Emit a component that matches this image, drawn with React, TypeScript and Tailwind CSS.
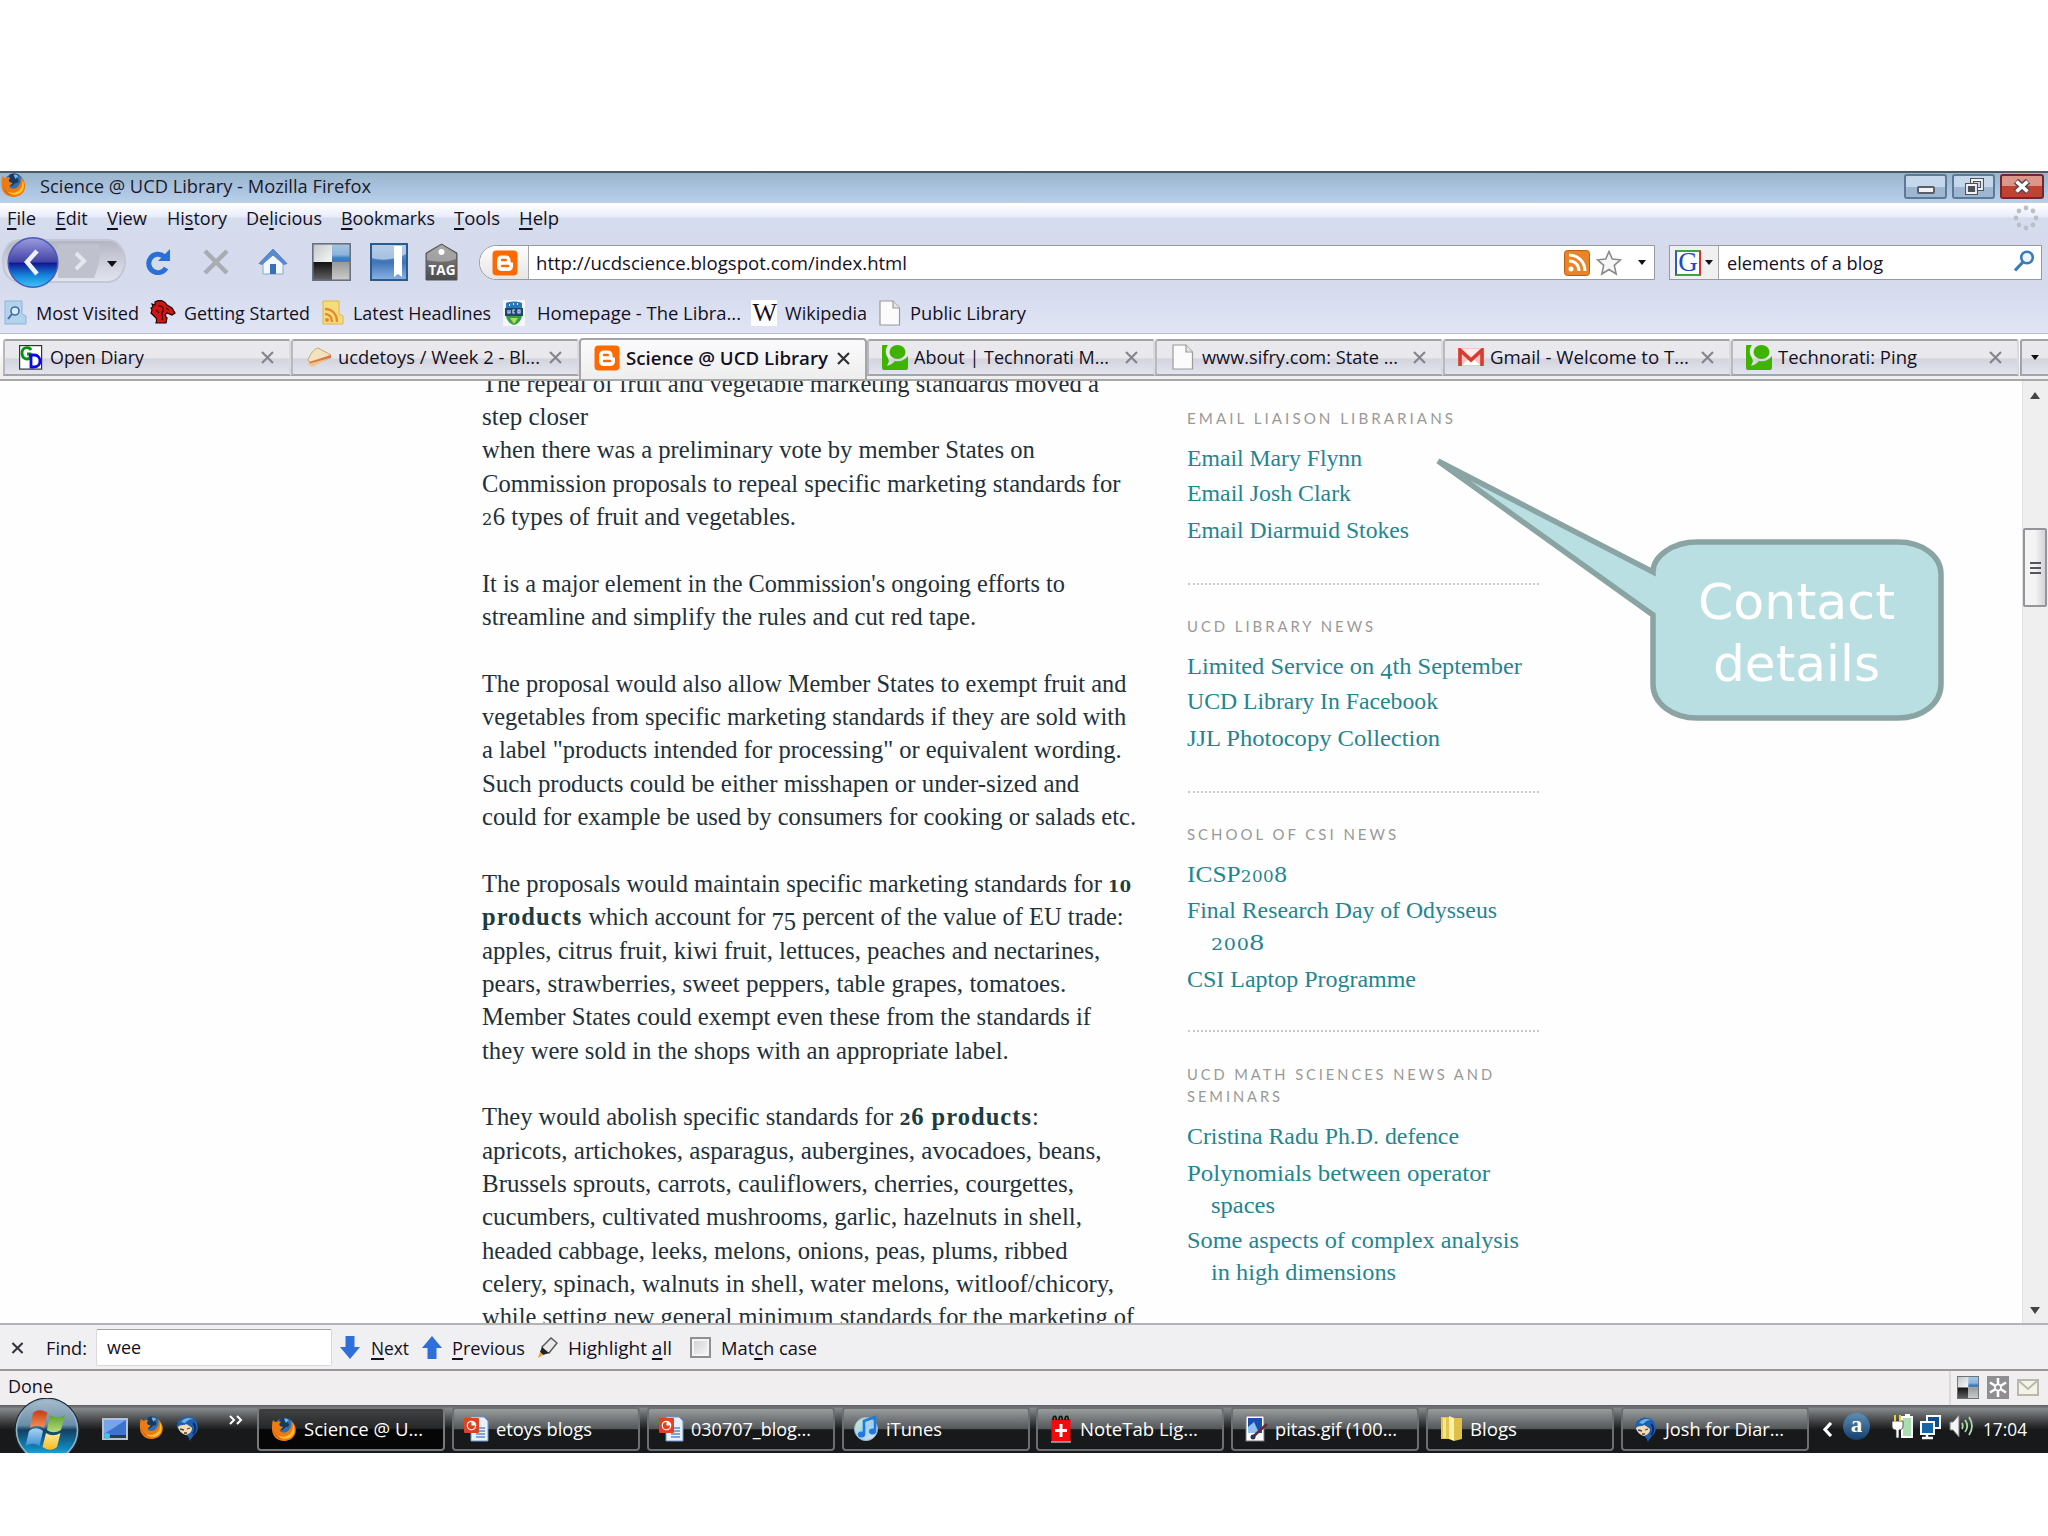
import { useLayoutEffect, useRef } from "react";
import type { ReactNode } from "react";

const UI = "font-['Open_Sans','Noto_Sans',sans-serif]";
const SERIF = "font-['Liberation_Serif',serif]";

/* One line of text stretched or squeezed horizontally to an exact width. */
function Fit({ w, className = "", children }: { w: number; className?: string; children: ReactNode }) {
  const ref = useRef<HTMLSpanElement>(null);
  useLayoutEffect(() => {
    const el = ref.current;
    if (!el) return;
    el.style.transform = "none";
    const natural = el.getBoundingClientRect().width;
    if (natural > 0) el.style.transform = `scaleX(${w / natural})`;
  }, [w, children]);
  return (
    <span className={"block shrink-0 whitespace-nowrap " + className} style={{ width: w }}>
      <span ref={ref} className="inline-block origin-left">{children}</span>
    </span>
  );
}

/* Old-style figures: 0-2 at x-height, 3-5, 7 and 9 hanging below the baseline. */
function OldFigures({ text }: { text: string }) {
  return (
    <>
      {text.split(/(\d)/).map((c, i) =>
        /^[012]$/.test(c) ? (
          <span key={i} className="font-['DejaVu_Serif',serif] text-[0.66em] leading-none tracking-[0.5px]">{c}</span>
        ) : /^[34579]$/.test(c) ? (
          <span key={i} className="relative top-[0.2em] leading-none">{c}</span>
        ) : (
          c
        ),
      )}
    </>
  );
}

const Strong = ({ text }: { text: string }) => (
  <b className="tracking-[1px] text-[#1d3c40]"><OldFigures text={text} /></b>
);

const U = ({ children }: { children: string }) => (
  <span className="underline decoration-[1.5px] underline-offset-[3px]">{children}</span>
);

/* ---------- icons ---------- */

const Firefox = ({ className = "h-[25px] w-[25px]" }: { className?: string }) => (
  <svg viewBox="0 0 26 26" className={className}>
    <circle cx="13.5" cy="11.5" r="10" fill="#2c6fb3" />
    <path d="M9 3c3-2 8-2 10 1-2 0-3 2-2 3 2 1 1 4-1 4-3 0-3 3-5 3-3 0-5-3-4-6z" fill="#173a63" />
    <path d="M13 3c2-1 4 0 5 1l-3 3z" fill="#6fb7e0" />
    <path d="M2 4c1 1 2 2 3 2 2-1 4-1 5 0-2 1-2 3-1 4l3 1c-1 2-3 2-3 4 2 2 6 2 8 0 3-3 4-6 3-10 4 3 6 8 4 13-2 5-7 7-11 7C6 25 1 20 1 13c0-4 0-6 1-9z" fill="#ee7a12" />
    <path d="M22 8c2 4 2 9-1 12-4 4-11 3-14 0 6 2 12 0 14-5 1-3 1-5 1-7z" fill="#fcc530" />
    <path d="M2 10c0 6 3 11 9 13-5-1-9-5-9-13z" fill="#b83c0b" />
  </svg>
);

const Blogger = () => (
  <svg viewBox="0 0 26 26" className="h-[26px] w-[26px]">
    <rect x="0.5" y="0.5" width="25" height="25" rx="4" fill="#ff6a00" />
    <path d="M9.5 5.5h4.5c2.8 0 4.500 2 4.500 4.500v1c0 1 .5 1.500 1.500 1.500s1 .5 1 1.500v2.500c0 2.500-2 4.500-4.500 4.500h-7C7 21 5 19 5 16.500V10c0-2.500 2-4.500 4.500-4.500z" fill="#fff" />
    <path d="M10 10h3.800M10 16h6" stroke="#ff6a00" strokeWidth="2.400" strokeLinecap="round" />
  </svg>
);

const Technorati = () => (
  <svg viewBox="0 0 26 26" className="h-[26px] w-[26px]">
    <path d="M0 2q0-1 1-1h5C3 5 3 10 6 14l1 3-2 5c4-1 6-3 8-5 6 1 10-1 13-5v12q0 2-2 2H2q-2 0-2-2z" fill="#3fb400" />
    <ellipse cx="15.500" cy="8" rx="8" ry="7" fill="#3fb400" />
  </svg>
);

const Page = () => (
  <svg viewBox="0 0 22 26" className="h-[26px] w-[22px]">
    <path d="M1 1h13l6.500 7v17H1z" fill="#fbfbfb" stroke="#9a9a9a" strokeWidth="1.200" />
    <path d="M14 1v7h6.500" fill="#e5e5e5" stroke="#9a9a9a" strokeWidth="1.200" />
  </svg>
);

const OpenDiary = () => (
  <svg viewBox="0 0 24 25" className="h-[25px] w-[24px]">
    <rect x=".6" y=".6" width="22" height="23.500" fill="#fff" stroke="#333" strokeWidth="1.200" />
    <path d="M12 5C10 1 3 2 3 8s5 7 8 5V9H8" fill="none" stroke="#00930e" strokeWidth="2.800" />
    <path d="M12 10v12h3c8 0 8-12 0-12h-5" fill="none" stroke="#0808e8" strokeWidth="2.800" />
  </svg>
);

const Sandwich = () => (
  <svg viewBox="0 0 26 24" className="h-[24px] w-[26px]">
    <path d="M2 15C4 9 8 4 12 3l13 7-20 9z" fill="#f3e3bd" stroke="#c9a877" strokeWidth="1" />
    <path d="M3 17l22-7v3L5 21z" fill="#d97a4d" />
    <path d="M2 19l22-6-18 9z" fill="#efc58a" />
  </svg>
);

const Gmail = () => (
  <svg viewBox="0 0 26 18" className="h-[18px] w-[26px]">
    <rect width="26" height="18" fill="#f7c6c2" />
    <path d="M4 17l9-8 9 8z" fill="#fff" />
    <path d="M3.500 1h19L13 10z" fill="#fdeceb" />
    <path d="M2 18V2l11 10L24 2v16" fill="none" stroke="#d93a32" strokeWidth="3.600" />
  </svg>
);

const Rss = () => (
  <svg viewBox="0 0 26 26" className="h-[26px] w-[26px]">
    <rect x=".5" y=".5" width="25" height="25" rx="3" fill="#e98526" stroke="#bf5d10" />
    <path d="M5 5c9 0 16 7 16 16M5 11c6 0 10 4 10 10" fill="none" stroke="#fff" strokeWidth="3" />
    <circle cx="7" cy="19" r="2.500" fill="#fff" />
  </svg>
);

const TileSquare = ({ className }: { className: string }) => (
  <svg viewBox="0 0 39 38" className={className} preserveAspectRatio="none">
    <defs>
      <linearGradient id="tw" x1="0" y1="0" x2="1" y2="1"><stop stopColor="#bfc3c6" /><stop offset="1" stopColor="#f7f8f8" /></linearGradient>
      <linearGradient id="tb" x1="0" y1="0" x2="0" y2="1"><stop stopColor="#a9c6e2" /><stop offset=".6" stopColor="#8fb5db" /><stop offset=".8" stopColor="#3f7dbf" /></linearGradient>
      <linearGradient id="tk" x1="0" y1="0" x2="0" y2="1"><stop stopColor="#111" /><stop offset="1" stopColor="#666" /></linearGradient>
      <linearGradient id="tg" x1="0" y1="0" x2="0" y2="1"><stop stopColor="#999" /><stop offset="1" stopColor="#cfcfcf" /></linearGradient>
    </defs>
    <rect width="20" height="19" fill="url(#tw)" />
    <rect x="20" width="19" height="19" fill="url(#tb)" />
    <rect y="19" width="20" height="19" fill="url(#tk)" />
    <rect x="20" y="19" width="19" height="19" fill="url(#tg)" />
    <rect x=".8" y=".8" width="37.400" height="36.400" fill="none" stroke="#68727c" strokeWidth="1.600" />
  </svg>
);

const BookmarkSquare = () => (
  <svg viewBox="0 0 38 38" className="h-[38px] w-[38px]">
    <defs><linearGradient id="bm" x1="0" y1="0" x2="0" y2="1"><stop stopColor="#8fb2da" /><stop offset=".5" stopColor="#3f74b8" /><stop offset="1" stopColor="#8cb2e4" /></linearGradient></defs>
    <rect x="1" y="1" width="36" height="36" fill="url(#bm)" stroke="#2b5a8c" strokeWidth="2" />
    <path d="M2 2h34v9C26 17 10 18 2 15z" fill="#c3d7ec" opacity=".75" />
    <path d="M24 3h8v31l-4-3-4 3z" fill="#fff" />
  </svg>
);

const Tag = () => (
  <svg viewBox="0 0 33 39" className="h-[39px] w-[33px]">
    <defs><linearGradient id="tagg" x1="0" y1="0" x2="0" y2="1"><stop stopColor="#8d8d8d" /><stop offset=".5" stopColor="#6d6d6d" /><stop offset="1" stopColor="#4c4c4c" /></linearGradient></defs>
    <path d="M1 11L16.500 2 32 11v27H1z" fill="url(#tagg)" stroke="#555" />
    <path d="M2 12l14.500-9L31 12v5c-10 4-20 3-29 1z" fill="#b5b5b5" opacity=".7" />
    <circle cx="16.500" cy="10" r="3" fill="#fff" />
    <text x="3.500" y="33" fill="#fff" fontSize="14.500" fontWeight="700" fontFamily="Open Sans, sans-serif" textLength="27" lengthAdjust="spacingAndGlyphs">TAG</text>
  </svg>
);

const Caret = ({ className = "" }: { className?: string }) => (
  <svg viewBox="0 0 8 5" className={"h-[5px] w-[8px] " + className}><path d="M0 0h8L4 5z" fill="#111" /></svg>
);

const Close = ({ color = "#85858f", className = "h-[13px] w-[13px]" }: { color?: string; className?: string }) => (
  <svg viewBox="0 0 13 13" className={className}><path d="M1 1l11 11M12 1L1 12" stroke={color} strokeWidth="2.200" /></svg>
);

const BackForward = () => (
  <svg viewBox="0 0 128 54" className="h-[54px] w-[128px] shrink-0">
    <defs>
      <linearGradient id="bk" x1="0" y1="0" x2="0" y2="1"><stop stopColor="#9c9ee0" /><stop offset=".48" stopColor="#4444a8" /><stop offset=".52" stopColor="#101a98" /><stop offset=".75" stopColor="#1580d8" /><stop offset="1" stopColor="#3cc8fa" /></linearGradient>
      <linearGradient id="pl" x1="0" y1="0" x2="0" y2="1"><stop stopColor="#b2b4c1" /><stop offset=".5" stopColor="#cccfdb" /><stop offset="1" stopColor="#e2e4ee" /></linearGradient>
    </defs>
    <path d="M20 5h88c10 0 17 10 17 21s-7 21-17 21H20C9 47 3 38 3 26S9 5 20 5z" fill="url(#pl)" stroke="#c3c6d3" strokeWidth="2" />
    <path d="M58 9h40c3 10 3 15-4 34H58z" fill="#bfc1cd" />
    <path d="M76 18l8 8-8 8" fill="none" stroke="#e4e6ee" strokeWidth="4" />
    <circle cx="33" cy="27.500" r="24.800" fill="url(#bk)" stroke="#4a5ab8" strokeWidth="1.500" />
    <path d="M37 16L27 27l10 12" fill="none" stroke="#eef2fa" strokeWidth="4.500" />
    <path d="M107 26h10l-5 6z" fill="#111" />
  </svg>
);

const Reload = () => (
  <svg viewBox="0 0 26 26" className="h-[26px] w-[26px]">
    <path d="M19 7.500A9.200 9.200 0 1 0 21 19" fill="none" stroke="#2a6fd6" strokeWidth="5" />
    <path d="M25 0v12H13z" fill="#2a6fd6" />
  </svg>
);

const Home = () => (
  <svg viewBox="0 0 30 28" className="h-[28px] w-[30px]">
    <path d="M5 14l10-9 10 9v12H5z" fill="#f2f7fd" stroke="#86a6cf" />
    <rect x="12" y="16" width="6" height="10" fill="#3a6fb8" />
    <path d="M1 15.500L15 1l14 14.500-3 1L15 7 4 16.500z" fill="#5a8bd0" stroke="#4a78bb" strokeWidth=".8" />
  </svg>
);

const RedHead = () => (
  <svg viewBox="0 0 26 25" className="h-[25px] w-[26px]">
    <path d="M5 2c5-3 10-1 12 3l5 3 3 5-3 2-5-2c-2 1-2 3 0 5l-1 5H6c1-3 1-5-1-6L1 13l1-3-1-2 2-1-1-3 3 1z" fill="#d11414" stroke="#1c0505" strokeWidth="1.200" />
    <path d="M8 6c4-1 6 2 5 5-3 2 1 5-1 9M6 10l3 3M16 8l3 2" fill="none" stroke="#400" strokeWidth="1.200" />
  </svg>
);

const VisitedFolder = () => (
  <svg viewBox="0 0 23 25" className="h-[25px] w-[23px]">
    <path d="M1 1h17v13l4 2v8H1z" fill="#b3d2ec" stroke="#8eb3d4" />
    <circle cx="11" cy="11" r="4" fill="#dceaf7" stroke="#3b6fa8" strokeWidth="1.600" />
    <path d="M8 14l-4 5" stroke="#3b6fa8" strokeWidth="2" />
  </svg>
);

const FeedFolder = () => (
  <svg viewBox="0 0 22 25" className="h-[25px] w-[22px]">
    <path d="M1 1h16v13l4 2v8H1z" fill="#f7dc7c" stroke="#dcb64c" />
    <path d="M3 9c7 0 12 5 12 13M3 14c4 0 7 3 7 8" fill="none" stroke="#e58a2c" strokeWidth="2.400" />
    <circle cx="5" cy="20" r="2" fill="#e58a2c" />
  </svg>
);

const Crest = () => (
  <svg viewBox="0 0 22 26" className="h-[26px] w-[22px]">
    <rect width="22" height="26" fill="#f4f6fa" />
    <path d="M3 3c5-2 11-2 16 0v5H3z" fill="#2b78b8" />
    <path d="M2 8h18v8H2z" fill="#1d4677" />
    <path d="M3 16h16c-1 5-4 8-8 9-4-1-7-4-8-9z" fill="#38a048" />
    <path d="M7 18h8l-4 6z" fill="#b6dc50" />
    <path d="M5 10v3h2v-3M12 10h-2v3h2M15 10v3h2v-3z" fill="none" stroke="#cfdceb" strokeWidth="1.200" />
    <path d="M6 5h1M10 4h1M14 4h1" stroke="#fff" strokeWidth="2" />
  </svg>
);

const Star = () => (
  <svg viewBox="0 0 26 26" className="h-[26px] w-[26px]">
    <path d="M13 1.500l3.300 7.500 8.200.8-6.200 5.500 1.900 8.700L13 19.500 5.800 24l1.900-8.700L1.500 9.800 9.700 9z" fill="#f6f6f6" stroke="#8b8b8b" strokeWidth="1.600" />
  </svg>
);

const Magnifier = () => (
  <svg viewBox="0 0 22 22" className="h-[22px] w-[22px]">
    <circle cx="14" cy="7.500" r="5.800" fill="#eaf4fc" stroke="#3a7ab8" strokeWidth="2.600" />
    <path d="M10 12l-8 8.500" stroke="#3a7ab8" strokeWidth="3.200" />
  </svg>
);

const Spinner = () => (
  <svg viewBox="0 0 26 26" className="h-[26px] w-[26px]">
    {[[13, 3], [20, 6], [23, 13], [20, 20], [13, 23], [6, 20], [3, 13], [6, 6]].map(([x, y]) => (
      <circle key={`${x}-${y}`} cx={x} cy={y} r="2.400" fill="#bdbfc8" />
    ))}
  </svg>
);

const Thunderbird = () => (
  <svg viewBox="0 0 24 26" className="h-[26px] w-[24px]">
    <path d="M2 7C3 4 5 5 7 2c1 1 2 0 4-1 1 2 4 0 6 2 2 1 4 3 4 6 2 4 0 9-3 11-1 2-3 3-4 6-1-3-2-5-4-6-4-2-8-5-9-8-1-2 1-3 1-5z" fill="#1f5fae" />
    <path d="M5 7c3-4 8-5 12-3-4 0-6 2-8 4z" fill="#6db3ea" />
    <path d="M2 12c3-3 6-1 8-3 2 1 4 2 6 4 0 4-3 6-6 7-4-1-7-4-8-8z" fill="#f2dcb8" />
    <path d="M4 14l4 1M11 14l3-1M8 18h3" stroke="#5b4026" fill="none" strokeWidth="1.300" />
    <path d="M17 8c3 3 3 7 0 11" stroke="#0c2c66" fill="none" strokeWidth="2" />
  </svg>
);

const PowerPoint = () => (
  <svg viewBox="0 0 25 26" className="h-[26px] w-[25px]">
    <path d="M7 1h13l4 4v20H7z" fill="#e8f0fb" stroke="#6f95c8" />
    <path d="M12 12h9M12 15h9M12 18h9M12 21h9" stroke="#5d8ad0" strokeWidth="1.300" />
    <rect y="2" width="15" height="15" rx="1" fill="#db4324" />
    <circle cx="7.500" cy="9.500" r="4.800" fill="#fff" />
    <path d="M7.500 6v3.500H11A3.600 3.600 0 1 1 7.500 6z" fill="#db4324" />
  </svg>
);

const ITunes = () => (
  <svg viewBox="0 0 25 27" className="h-[27px] w-[25px]">
    <defs><linearGradient id="it" x1="0" y1="0" x2="1" y2="1"><stop stopColor="#d7f0c8" /><stop offset=".5" stopColor="#9fd0f2" /><stop offset="1" stopColor="#e4e8f2" /></linearGradient></defs>
    <circle cx="12" cy="14" r="11.500" fill="url(#it)" stroke="#9db4c8" />
    <path d="M10 19V6l11-4v14" fill="none" stroke="#1f7ae0" strokeWidth="2.600" />
    <ellipse cx="7.500" cy="19.500" rx="3.600" ry="3" fill="#1f7ae0" />
    <ellipse cx="18.500" cy="16.500" rx="3.600" ry="3" fill="#1f7ae0" />
  </svg>
);

const NoteTab = () => (
  <svg viewBox="0 0 20 28" className="h-[28px] w-[20px]">
    <rect x=".5" y="4" width="19" height="23" fill="#f00c0c" />
    <path d="M0 27h20" stroke="#aaa" strokeWidth="1.500" />
    <path d="M10 9v13M4 15.500h12" stroke="#fff" strokeWidth="3" />
    <path d="M2 5c0-5 4-5 3 0M8 5c0-5 4-5 3 0M14 5c0-5 4-5 3 0" fill="none" stroke="#111" strokeWidth="1.600" />
  </svg>
);

const Picture = () => (
  <svg viewBox="0 0 23 27" className="h-[27px] w-[23px]">
    <rect x="1" y="1" width="18" height="25" fill="#fff" stroke="#777" />
    <rect x="3" y="3" width="14" height="15" fill="#1a4fae" />
    <path d="M3 12l6-5 5 11H3z" fill="#8fc0f2" />
    <path d="M22 9L11 19l-4 4" stroke="#6a2a30" strokeWidth="2.600" />
    <circle cx="8" cy="22" r="2.500" fill="#27345c" />
  </svg>
);

const Folder = () => (
  <svg viewBox="0 0 23 27" className="h-[27px] w-[23px]">
    <path d="M1 2h8v22H1z" fill="#e3c44e" /><path d="M9 1l5 2v23l-5-2z" fill="#fbf0a8" /><path d="M14 3h8v21l-8 2z" fill="#dfbf48" /><path d="M3 3h3v20H3z" fill="#f6e58d" />
  </svg>
);

const ShowDesktop = () => (
  <svg viewBox="0 0 26 22" className="h-[22px] w-[26px]">
    <rect x="1" y="1" width="24" height="20" fill="#3b73cf" stroke="#b9c4d1" strokeWidth="2" />
    <path d="M2 2h22L2 16z" fill="#77a5ea" /><rect x="2" y="17" width="22" height="3" fill="#253a5c" /><circle cx="5" cy="18" r="3" fill="#4dc0e6" />
  </svg>
);

const StartOrb = () => (
  <svg viewBox="0 0 66 55" className="h-[55px] w-[66px]">
    <defs>
      <linearGradient id="orb" x1="0" y1="0" x2="0" y2="1"><stop stopColor="#a9bccb" /><stop offset=".42" stopColor="#6a8da8" /><stop offset=".5" stopColor="#143f60" /><stop offset=".8" stopColor="#0f86bd" /><stop offset="1" stopColor="#38c8ef" /></linearGradient>
      <linearGradient id="fr" x1="0" y1="0" x2="0" y2="1"><stop stopColor="#c93a15" /><stop offset="1" stopColor="#f0955a" /></linearGradient>
      <linearGradient id="fg" x1="0" y1="0" x2="0" y2="1"><stop stopColor="#5ea12b" /><stop offset="1" stopColor="#b5dc7a" /></linearGradient>
      <linearGradient id="fb" x1="0" y1="0" x2="0" y2="1"><stop stopColor="#a5d3f2" /><stop offset="1" stopColor="#3f8fd4" /></linearGradient>
      <linearGradient id="fy" x1="0" y1="0" x2="0" y2="1"><stop stopColor="#fdeb9a" /><stop offset="1" stopColor="#f9b81f" /></linearGradient>
    </defs>
    <circle cx="33" cy="32" r="32.500" fill="#20282c" />
    <circle cx="33" cy="32" r="30.500" fill="url(#orb)" stroke="#8fb2c8" strokeWidth="1.600" />
    <path d="M19 15c5-4 10-3 14.500 0l-3.500 15c-4-3-9-3-14 0z" fill="url(#fr)" />
    <path d="M36 17c5 3 10 3 15 0l-4 15c-5 3-10 3-14 0z" fill="url(#fg)" />
    <path d="M15 33c5-4 10-3 14 0l-3.500 15c-4-3-9-3-14 0z" fill="url(#fb)" />
    <path d="M32 35c5 3 9 3 14.500 0L43 49c-5 4-10 3-14.500 0z" fill="url(#fy)" />
  </svg>
);

/* ---------- chrome ---------- */

function TitleBar() {
  return (
    <div className="flex h-[32px] items-start border-t-2 border-[#4d5c62] bg-linear-to-b from-[#99b5cb] via-[#a9c2df] to-[#bad0e8]">
      <Firefox className="-mt-px h-[26px] w-[27px] shrink-0" />
      <Fit w={331} className="ml-[13px] mt-[-1px] leading-[28px] text-[#1a1a2a]">Science @ UCD Library - Mozilla Firefox</Fit>
      <div className="ml-auto mr-[4px] mt-[1px] flex gap-[5px]">
        <span className="flex h-[25px] w-[43px] items-center justify-center rounded-[3px] border-2 border-[#5f7896] bg-linear-to-b from-[#c5d7ea] from-50% to-[#9db7d3] to-50%">
          <span className="mt-[7px] h-[8px] w-[18px] rounded-[2px] border-2 border-[#5b6068] bg-[#f3f3f3]" />
        </span>
        <span className="flex h-[25px] w-[43px] items-center justify-center rounded-[3px] border-2 border-[#5f7896] bg-linear-to-b from-[#c5d7ea] from-50% to-[#9db7d3] to-50%">
          <svg viewBox="0 0 20 18" className="h-[18px] w-[20px]">
            <path d="M8 2h10v9H8z" fill="none" stroke="#4d535d" strokeWidth="4" /><path d="M8 2h10v9H8z" fill="none" stroke="#f4f4f4" strokeWidth="1.800" />
            <path d="M3 7h9v8H3z" fill="#9db7d3" stroke="#4d535d" strokeWidth="4" /><path d="M3 7h9v8H3z" fill="#4d535d" stroke="#f4f4f4" strokeWidth="1.800" />
          </svg>
        </span>
        <span className="flex h-[25px] w-[44px] items-center justify-center rounded-[3px] border-2 border-[#6d2a2c] bg-linear-to-b from-[#dd9689] from-45% to-[#c04332] to-50%">
          <svg viewBox="0 0 18 15" className="h-[15px] w-[18px]">
            <path d="M3 2l12 11M15 2L3 13" stroke="#5b4a4e" strokeWidth="6.500" /><path d="M3.500 2.500l11 10M14.500 2.500l-11 10" stroke="#fff" strokeWidth="3.600" />
          </svg>
        </span>
      </div>
    </div>
  );
}

const menus: [number, string, string, string][] = [
  [29, "", "F", "ile"],
  [32, "", "E", "dit"],
  [40, "", "V", "iew"],
  [60, "Hi", "s", "tory"],
  [76, "De", "l", "icious"],
  [94, "", "B", "ookmarks"],
  [46, "", "T", "ools"],
  [40, "", "H", "elp"],
];

function MenuBar() {
  return (
    <div className="flex h-[30px] items-center gap-[19.700px] bg-linear-to-b from-white from-5% via-[#e9ecfa] via-46% to-[#d5dced] to-50% pl-[7px] pr-[9px]">
      {menus.map(([w, a, u, b], i) => (
        <Fit key={u + b} w={w} className={i > 2 ? "-ml-[0.500px] leading-[30px]" : "leading-[30px]"}>{a}<U>{u}</U>{b}</Fit>
      ))}
      <span className="ml-auto"><Spinner /></span>
    </div>
  );
}

function NavBar() {
  return (
    <div className="flex h-[58px] items-center bg-[#d5dbed]">
      <BackForward />
      <span className="ml-[17px]"><Reload /></span>
      <span className="ml-[32px]"><Close color="#a9abb5" className="h-[26px] w-[26px]" /></span>
      <span className="ml-[29px]"><Home /></span>
      <span className="ml-[24px]"><TileSquare className="h-[38px] w-[39px]" /></span>
      <span className="ml-[19px]"><BookmarkSquare /></span>
      <span className="ml-[17px] -mt-px"><Tag /></span>
      <div className="ml-[21px] mt-[1px] flex h-[35px] w-[1176px] items-center rounded-l-[18px] border-[1.5px] border-[#96999d] bg-white">
        <span className="flex h-full w-[49px] items-center justify-center rounded-l-[17px] border-r border-[#a5a8ab] bg-linear-to-b from-[#fdfdfd] to-[#e6e6e6] pl-px"><Blogger /></span>
        <Fit w={371} className="ml-[7px] leading-[30px]">http://ucdscience.blogspot.com/index.html</Fit>
        <span className="ml-auto"><Rss /></span>
        <span className="ml-[6px]"><Star /></span>
        <Caret className="ml-[16px] mr-[8px]" />
      </div>
      <div className="ml-[14px] mt-[1px] flex h-[35px] w-[373px] items-center border-[1.5px] border-[#96999d] bg-white">
        <span className="flex h-full w-[49px] items-center gap-[4px] border-r border-[#a5a8ab] bg-[#f0f0f0] pl-[5px]">
          <span className="flex h-[26px] w-[26px] items-center justify-center border-2 border-b-[#3ba53b] border-l-[#2c5cc4] border-r-[#d93030] border-t-[#3ba53b] bg-white font-['Liberation_Serif',serif] text-[27px] leading-none text-[#1d4cc0]">G</span>
          <Caret />
        </span>
        <Fit w={156} className="ml-[8px] leading-[30px]">elements of a blog</Fit>
        <span className="ml-auto mr-[6px] -mt-[4px]"><Magnifier /></span>
      </div>
    </div>
  );
}

function BookmarksBar() {
  return (
    <div className="flex h-[43px] items-center border-b-[1.5px] border-[#b9bccd] bg-linear-to-b from-[#d5dbed] to-[#e1e5f6] pt-[1px] leading-[30px]">
      <span className="ml-[4px]"><VisitedFolder /></span>
      <Fit w={103} className="ml-[9px]">Most Visited</Fit>
      <span className="ml-[11px]"><RedHead /></span>
      <Fit w={126} className="ml-[8px]">Getting Started</Fit>
      <span className="ml-[12px]"><FeedFolder /></span>
      <Fit w={138} className="ml-[9px]">Latest Headlines</Fit>
      <span className="ml-[12px]"><Crest /></span>
      <Fit w={204} className="ml-[12px]">Homepage - The Libra...</Fit>
      <span className="ml-[10px] flex h-[26px] w-[26px] items-center justify-center bg-white font-['Liberation_Serif',serif] text-[26px] leading-none tracking-tighter">W</span>
      <Fit w={82} className="ml-[8px]">Wikipedia</Fit>
      <span className="ml-[12px]"><Page /></span>
      <Fit w={116} className="ml-[9px]">Public Library</Fit>
    </div>
  );
}

const tabs: { icon: ReactNode; text: string; w: number; active?: boolean }[] = [
  { icon: <OpenDiary />, text: "Open Diary", w: 94 },
  { icon: <Sandwich />, text: "ucdetoys / Week 2 - Bl...", w: 202 },
  { icon: <Blogger />, text: "Science @ UCD Library", w: 202, active: true },
  { icon: <Technorati />, text: "About | Technorati M...", w: 195 },
  { icon: <Page />, text: "www.sifry.com: State ...", w: 196 },
  { icon: <Gmail />, text: "Gmail - Welcome to T...", w: 199 },
  { icon: <Technorati />, text: "Technorati: Ping", w: 139 },
];

function TabStrip() {
  return (
    <div className="flex h-[47px] items-start border-b-2 border-[#a9a8a8] bg-linear-to-b from-white from-30% to-[#f0eeee] to-80% pl-[3px]">
      {tabs.map((t) => (
        <div
          key={t.text}
          className={
            t.active
              ? "mt-[4px] flex h-[41px] w-[288px] shrink-0 items-center rounded-t-[4px] border-x-2 border-t-2 border-[#a3a3a8] bg-linear-to-b from-[#fbfbfb] to-[#efeeee] pb-[3px] pl-[13px] pr-[15px]"
              : "mt-[5px] flex h-[37px] w-[288px] shrink-0 items-center rounded-t-[3px] border-2 border-[#a3a3a8] border-l-[#b8b8be] border-r-[#d9d9de] bg-linear-to-b from-[#e9e9ed] from-50% via-[#d3d4de] via-55% to-[#e4e4ee] pb-px pl-[12.500px] pr-[15px]"
          }
        >
          <span className="flex w-[26px] justify-center">{t.icon}</span>
          <Fit w={t.w} className={t.active ? "ml-[6px] font-semibold leading-[30px]" : "ml-[6px] leading-[30px]"}>{t.text}</Fit>
          <span className="ml-auto"><Close color={t.active ? "#303038" : "#85858f"} /></span>
        </div>
      ))}
      <div className="ml-px mt-[5px] flex h-[37px] grow items-center justify-center rounded-tl-[3px] border-y-2 border-l-2 border-[#a3a3a8] bg-linear-to-b from-[#e9e9ed] from-50% via-[#d3d4de] via-55% to-[#e4e4ee]">
        <Caret className="w-[7px]" />
      </div>
    </div>
  );
}

/* ---------- page ---------- */

const K = 1.3061;
const article: ([number, ReactNode] | null)[] = [
  [841, "The repeal of fruit and vegetable marketing standards moved a"],
  [450, "step closer"],
  [792, "when there was a preliminary vote by member States on"],
  [857.5, "Commission proposals to repeal specific marketing standards for"],
  [609, <OldFigures text="26 types of fruit and vegetables." />],
  null,
  [815, "It is a major element in the Commission's ongoing efforts to"],
  [747, "streamline and simplify the rules and cut red tape."],
  null,
  [862, "The proposal would also allow Member States to exempt fruit and"],
  [862, "vegetables from specific marketing standards if they are sold with"],
  [858.5, "a label \"products intended for processing\" or equivalent wording."],
  [826, "Such products could be either misshapen or under-sized and"],
  [869.5, "could for example be used by consumers for cooking or salads etc."],
  null,
  [866, <>The proposals would maintain specific marketing standards for <Strong text="10" /></>],
  [860, <><Strong text="products" /> which account for <OldFigures text="75" /> percent of the value of EU trade:</>],
  [842, "apples, citrus fruit, kiwi fruit, lettuces, peaches and nectarines,"],
  [816, "pears, strawberries, sweet peppers, table grapes, tomatoes."],
  [835, "Member States could exempt even these from the standards if"],
  [772, "they were sold in the shops with an appropriate label."],
  null,
  [795, <>They would abolish specific standards for <Strong text="26 products" />:</>],
  [843, "apricots, artichokes, asparagus, aubergines, avocadoes, beans,"],
  [822, "Brussels sprouts, carrots, cauliflowers, cherries, courgettes,"],
  [828, "cucumbers, cultivated mushrooms, garlic, hazelnuts in shell,"],
  [817, "headed cabbage, leeks, melons, onions, peas, plums, ribbed"],
  [852.5, "celery, spinach, walnuts in shell, water melons, witloof/chicory,"],
  [868, "while setting new general minimum standards for the marketing of"],
];

type Row = { h: string; kind: "head" | "link" | "sub" | "rule"; text?: string; w?: number };
const sidebar: Row[] = [
  { h: "h-[49px]", kind: "head", text: "EMAIL LIAISON LIBRARIANS", w: 269 },
  { h: "h-[42px]", kind: "link", text: "Email Mary Flynn", w: 175 },
  { h: "h-[35px]", kind: "link", text: "Email Josh Clark", w: 164 },
  { h: "h-[37px]", kind: "link", text: "Email Diarmuid Stokes", w: 222 },
  { h: "h-[41px]", kind: "rule" },
  { h: "h-[53px]", kind: "head", text: "UCD LIBRARY NEWS", w: 189 },
  { h: "h-[42px]", kind: "link", text: "Limited Service on 4th September", w: 335 },
  { h: "h-[35px]", kind: "link", text: "UCD Library In Facebook", w: 251 },
  { h: "h-[37px]", kind: "link", text: "JJL Photocopy Collection", w: 253 },
  { h: "h-[41px]", kind: "rule" },
  { h: "h-[53px]", kind: "head", text: "SCHOOL OF CSI NEWS", w: 212 },
  { h: "h-[42px]", kind: "link", text: "ICSP2008", w: 100 },
  { h: "h-[36px]", kind: "link", text: "Final Research Day of Odysseus", w: 310 },
  { h: "h-[32px]", kind: "sub", text: "2008", w: 53 },
  { h: "h-[37px]", kind: "link", text: "CSI Laptop Programme", w: 229 },
  { h: "h-[39px]", kind: "rule" },
  { h: "h-[54px]", kind: "head", text: "UCD MATH SCIENCES NEWS AND", w: 308 },
  { h: "h-[22px]", kind: "head", text: "SEMINARS", w: 96 },
  { h: "h-[42px]", kind: "link", text: "Cristina Radu Ph.D. defence", w: 272 },
  { h: "h-[37px]", kind: "link", text: "Polynomials between operator", w: 303 },
  { h: "h-[32px]", kind: "sub", text: "spaces", w: 64 },
  { h: "h-[35px]", kind: "link", text: "Some aspects of complex analysis", w: 332 },
  { h: "h-[32px]", kind: "sub", text: "in high dimensions", w: 185 },
];

function Sidebar() {
  return (
    <div className="w-[352px] shrink-0">
      {sidebar.map((r, i) =>
        r.kind === "rule" ? (
          <div key={i} className={r.h + " ml-[1px] border-b-2 border-dotted border-[#c9c9cc]"} />
        ) : (
          <div key={i} className={r.h + " flex items-end"}>
            {r.kind === "head" ? (
              <Fit w={r.w!} className="font-['Lato',sans-serif] text-[15px] leading-[24px] tracking-[3px] text-[#999]">{r.text}</Fit>
            ) : (
              <Fit w={r.w!} className={"font-['Liberation_Serif',serif] text-[24px] leading-[28px] text-[#1f8590]" + (r.kind === "sub" ? " ml-[24px]" : "")}>
                <OldFigures text={r.text!} />
              </Fit>
            )}
          </div>
        ),
      )}
    </div>
  );
}

function Callout() {
  return (
    <div className="absolute left-[1430px] top-[71px] h-[280px] w-[520px]">
      <svg viewBox="0 0 520 280" className="absolute inset-0 h-full w-full">
        <path
          d="M8 9L223 120C223 104 243 90 267 90H468C492 90 511 104 511 122V232C511 252 492 266 468 266H267C243 266 223 252 223 232V163Z"
          fill="#b9dfe2" stroke="#8aa4a4" strokeWidth="5.500" strokeLinejoin="miter" strokeMiterlimit="2"
        />
      </svg>
      <div className="absolute left-[225px] top-[120px] flex w-[283px] flex-col items-center font-['DejaVu_Sans',sans-serif] text-[50px] leading-[61.500px] text-white">
        <Fit w={197}>Contact</Fit>
        <Fit w={167}>details</Fit>
      </div>
    </div>
  );
}

function ScrollBar() {
  return (
    <div className="ml-auto flex w-[26px] shrink-0 flex-col items-center border-l border-[#e2e2e2] bg-[#f0eff0] pr-px">
      <svg viewBox="0 0 10 7" className="mt-[11px] h-[7px] w-[10px]"><path d="M0 7h10L5 0z" fill="#444" /></svg>
      <div className="mt-[129px] flex h-[79px] w-full flex-col items-center justify-center gap-[3px] rounded-[2px] border-2 border-[#94949a] bg-linear-to-r from-[#f4f4f5] from-50% to-[#d3d3d8]">
        <span className="h-[2px] w-[11px] bg-[#55555c]" />
        <span className="h-[2px] w-[11px] bg-[#55555c]" />
        <span className="h-[2px] w-[11px] bg-[#55555c]" />
      </div>
      <svg viewBox="0 0 10 7" className="mb-[9px] mt-auto h-[7px] w-[10px]"><path d="M0 0h10L5 7z" fill="#444" /></svg>
    </div>
  );
}

function PageView() {
  return (
    <div className="relative flex h-[942px] overflow-hidden bg-[#fefefe]">
      <div className={"-mt-[14.300px] ml-[481.500px] w-[705px] shrink-0 text-[24.500px] text-[#22303a] " + SERIF}>
        {article.map((line, i) => (
          <div key={i} className="h-[33.350px] leading-[33.350px]">
            {line && <Fit w={(line[0] - 368.7) * K}>{line[1]}</Fit>}
          </div>
        ))}
      </div>
      <Sidebar />
      <ScrollBar />
      <Callout />
    </div>
  );
}

/* ---------- bottom bars ---------- */

const Arrow = ({ up = false }: { up?: boolean }) => (
  <svg viewBox="0 0 20 23" className={"h-[23px] w-[20px] " + (up ? "rotate-180" : "")}>
    <path d="M5.500 0h9v11H20L10 23 0 11h5.500z" fill="#2f6fdc" />
  </svg>
);

function FindBar() {
  return (
    <div className="flex h-[48px] items-center border-b-2 border-t-2 border-b-[#98989b] border-t-[#b3b3b6] bg-[#f0eff1] pt-px leading-[30px]">
      <Close color="#33333b" className="ml-[11px] h-[12px] w-[13px]" />
      <Fit w={41} className="ml-[22px]">Find:</Fit>
      <div className="-mt-px ml-[9px] flex h-[37px] w-[236px] items-center rounded-[2px] border border-[#d9d9dc] border-t-[#a4a4a8] bg-white pl-[10px]">
        <Fit w={34}>wee</Fit>
      </div>
      <span className="ml-[8px]"><Arrow /></span>
      <Fit w={38} className="ml-[11px]"><U>N</U>ext</Fit>
      <span className="ml-[13px]"><Arrow up /></span>
      <Fit w={73} className="ml-[10px]"><U>P</U>revious</Fit>
      <svg viewBox="0 0 21 22" className="ml-[12px] h-[22px] w-[21px]">
        <path d="M5 10L14 1l6 5-8 10-5-1z" fill="#e9e9ea" stroke="#555" strokeWidth="1.400" />
        <path d="M5 10l7 6-6 2-3-3z" fill="#222" /><path d="M3 15l3 3-5 3z" fill="#f0a020" />
      </svg>
      <Fit w={104} className="ml-[10px]">Highlight <U>a</U>ll</Fit>
      <span className="ml-[18px] h-[21px] w-[21px] border-2 border-[#8d8f92] bg-linear-to-br from-[#cfcfd3] to-[#f8f8f8] outline-2 -outline-offset-4 outline-[#f4f4f4]" />
      <Fit w={96} className="ml-[10px]">Mat<U>c</U>h case</Fit>
    </div>
  );
}

function StatusBar() {
  return (
    <div className="flex h-[34px] items-center bg-[#f1eeef] leading-[28px]">
      <Fit w={45} className="ml-[8px] -mt-[4px]">Done</Fit>
      <div className="ml-auto flex h-full w-[99px] items-center gap-[8px] border-l-2 border-[#dcdadb] pl-[6px] pb-[2px]">
        <TileSquare className="h-[23px] w-[22px]" />
        <svg viewBox="0 0 22 23" className="h-[23px] w-[22px]">
          <rect width="22" height="23" fill="#8f8f92" />
          <path d="M11 2v19M3 6.500l16 10M19 6.500l-16 10" stroke="#fff" strokeWidth="2.600" /><circle cx="11" cy="11.500" r="3" fill="#8f8f92" stroke="#fff" strokeWidth="1.600" />
        </svg>
        <svg viewBox="0 0 22 17" className="h-[17px] w-[22px]">
          <rect x="1" y="1" width="20" height="15" fill="#f4f3e8" stroke="#b9b8ac" strokeWidth="2" /><path d="M2 2l9 8 9-8" fill="none" stroke="#b9b8ac" strokeWidth="2" />
        </svg>
      </div>
    </div>
  );
}

const tasks: { icon: ReactNode; text: string; w: number }[] = [
  { icon: <Firefox className="h-[26px] w-[26px]" />, text: "Science @ U...", w: 119 },
  { icon: <PowerPoint />, text: "etoys blogs", w: 96 },
  { icon: <PowerPoint />, text: "030707_blog...", w: 120 },
  { icon: <ITunes />, text: "iTunes", w: 56 },
  { icon: <NoteTab />, text: "NoteTab Lig...", w: 118 },
  { icon: <Picture />, text: "pitas.gif (100...", w: 122 },
  { icon: <Folder />, text: "Blogs", w: 47 },
  { icon: <Thunderbird />, text: "Josh for Diar...", w: 119 },
];

function TaskBar() {
  return (
    <div className="relative flex h-[48px] items-center bg-linear-to-b from-[#5b5e5f] via-[#85888a] via-8% to-[#17191b] to-52% leading-[30px] text-white">
      <div className="absolute -top-[7px] left-[14px]"><StartOrb /></div>
      <span className="ml-[102px]"><ShowDesktop /></span>
      <span className="-mt-[3px] ml-[11px]"><Firefox /></span>
      <span className="-mt-[2px] ml-[12px]"><Thunderbird /></span>
      <svg viewBox="0 0 14 10" className="ml-[29px] -mt-[18px] h-[10px] w-[14px]"><path d="M1 1l4 4-4 4M8 1l4 4-4 4" fill="none" stroke="#fff" strokeWidth="2" /></svg>
      <div className="ml-[14px] flex gap-[6.850px]">
        {tasks.map((t, i) => (
          <div
            key={t.text}
            className={
              "flex h-[44px] w-[188px] items-center rounded-[4px] border-2 pb-px " +
              (i === 0
                ? "border-[#77797b] bg-linear-to-b from-[#3c3d3e] from-10% via-[#262728] via-48% to-[#060606] to-52% pl-[12px]"
                : "border-[#6c6f71] bg-linear-to-b from-[#9a9d9e] via-[#55585a] via-49% to-[#17191a] to-52% pl-[10px]")
            }
          >
            <span className="flex w-[26px] justify-center">{t.icon}</span>
            <Fit w={t.w} className={i === 0 ? "ml-[7px] pt-px" : "ml-[6px]"}>{t.text}</Fit>
          </div>
        ))}
      </div>
      <svg viewBox="0 0 11 15" className="ml-[13px] h-[15px] w-[11px]"><path d="M9 1L3 7.500 9 14" fill="none" stroke="#fff" strokeWidth="3.200" /></svg>
      <span className="ml-[10px] -mt-[6px] flex h-[27px] w-[27px] items-center justify-center rounded-full bg-linear-to-b from-[#5d8fb5] to-[#123f6c] font-['Liberation_Serif',serif] text-[23px] font-bold leading-none"><span className="-mt-[4px]">a</span></span>
      <svg viewBox="0 0 23 26" className="ml-[21px] -mt-[6px] h-[26px] w-[23px]">
        <rect x="11" y="4" width="10" height="20" fill="#a9dfb0" stroke="#fff" strokeWidth="2" /><rect x="14" y="1" width="5" height="3" fill="#fff" />
        <path d="M1 8h11v5c0 3-2 4-4 4v8H5v-8c-3 0-4-2-4-4z" fill="#fff" stroke="#333" strokeWidth=".8" /><path d="M4 2v6M9 2v6" stroke="#e3d23c" strokeWidth="2" />
      </svg>
      <svg viewBox="0 0 23 26" className="ml-[5px] -mt-[5px] h-[26px] w-[23px]">
        <rect x="8" y="2" width="13" height="12" fill="#0d4e93" stroke="#fff" strokeWidth="2" /><rect x="2" y="8" width="13" height="12" fill="#1565a8" stroke="#fff" strokeWidth="2" />
        <path d="M8 20v3M3 24h11" stroke="#fff" strokeWidth="2.500" />
      </svg>
      <svg viewBox="0 0 26 26" className="ml-[6px] -mt-[6px] h-[26px] w-[26px]">
        <path d="M2 9h3l6-7v22l-6-7H2z" fill="#f3f3f3" stroke="#777" /><path d="M14 10c1 2 1 4 0 6M17 7c3 4 3 8 0 12M21 4c4 6 4 12 0 18" fill="none" stroke="#a8dca8" strokeWidth="1.800" />
      </svg>
      <Fit w={44} className="ml-[9px] -mt-px">17:04</Fit>
    </div>
  );
}

export default function App() {
  return (
    <div className={"h-[1536px] w-[2048px] overflow-hidden bg-white pt-[171px] text-[18px] text-[#14101f] " + UI}>
      <TitleBar />
      <MenuBar />
      <NavBar />
      <BookmarksBar />
      <TabStrip />
      <PageView />
      <FindBar />
      <StatusBar />
      <TaskBar />
    </div>
  );
}
